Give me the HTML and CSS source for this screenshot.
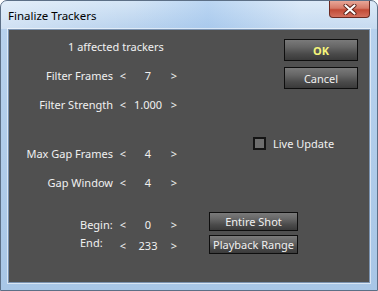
FILE: index.html
```html
<!DOCTYPE html>
<html lang="en">
<head>
    <meta charset="UTF-8">
    <title>Finalize Trackers</title>
    <link rel="stylesheet" href="styles.css">
</head>
<body>
    <div class="window">
        <div class="titlebar">
            <span class="title">Finalize Trackers</span>
            <div class="close-btn">
                <svg width="16" height="11" viewBox="0 0 16 11">
                    <path d="M3.5 1.5 L12.5 9.5 M12.5 1.5 L3.5 9.5" stroke="#5a2018" stroke-width="4" stroke-linecap="round"/>
                    <path d="M3.5 1.5 L12.5 9.5 M12.5 1.5 L3.5 9.5" stroke="#fff" stroke-width="2.2" stroke-linecap="round"/>
                </svg>
            </div>
        </div>
        <div class="frame">
            <div class="client">
                <div class="top">
                    <div class="form">
                        <div class="row affected">1 affected trackers</div>
                        <div class="row">
                            <span class="label">Filter Frames</span>
                            <span class="arrow">&lt;</span>
                            <span class="value">7</span>
                            <span class="arrow right">&gt;</span>
                        </div>
                        <div class="row">
                            <span class="label">Filter Strength</span>
                            <span class="arrow">&lt;</span>
                            <span class="value">1.000</span>
                            <span class="arrow right">&gt;</span>
                        </div>
                        <div class="row gap-top">
                            <span class="label">Max Gap Frames</span>
                            <span class="arrow">&lt;</span>
                            <span class="value">4</span>
                            <span class="arrow right">&gt;</span>
                        </div>
                        <div class="row">
                            <span class="label">Gap Window</span>
                            <span class="arrow">&lt;</span>
                            <span class="value">4</span>
                            <span class="arrow right">&gt;</span>
                        </div>
                    </div>
                    <div class="side">
                        <button class="btn ok">OK</button>
                        <button class="btn cancel">Cancel</button>
                        <label class="check">
                            <span class="box"></span>
                            <span>Live Update</span>
                        </label>
                    </div>
                </div>
                <div class="range">
                    <div class="range-rows">
                        <div class="row small">
                            <span class="label left">Begin:</span>
                            <span class="arrow">&lt;</span>
                            <span class="value">0</span>
                            <span class="arrow right">&gt;</span>
                        </div>
                        <div class="row small end">
                            <span class="label left">End:</span>
                            <span class="arrow">&lt;</span>
                            <span class="value">233</span>
                            <span class="arrow right">&gt;</span>
                        </div>
                    </div>
                    <div class="range-buttons">
                        <button class="btn wide">Entire Shot</button>
                        <button class="btn wide">Playback Range</button>
                    </div>
                </div>
            </div>
        </div>
    </div>
</body>
</html>
```

FILE: styles.css
```css
/* Page */
body {
    margin: 0;
    background: #ffffff;
    font-family: 'Noto Sans', sans-serif;
}

/* Aero window frame */
.window {
    width: 376px;
    height: 289px;
    border: 1px solid #5c6f86;
    border-radius: 7px 7px 0 0;
    background: linear-gradient(180deg, #d4e5f6 0px, #b7d1ed 29px, #a8c6e6 100%);
    display: flex;
    flex-direction: column;
}

.titlebar {
    height: 28px;
    display: flex;
    align-items: flex-start;
    background: linear-gradient(90deg, rgba(255,255,255,0.35) 0%, rgba(255,255,255,0) 35%, rgba(140,185,235,0.35) 55%, rgba(255,255,255,0.2) 80%);
    border-radius: 6px 6px 0 0;
}

.title {
    font-size: 11.5px;
    color: #000;
    padding: 7px 0 0 7px;
}

.close-btn {
    margin-left: auto;
    margin-right: 7px;
    width: 41px;
    height: 17px;
    box-sizing: border-box;
    border: 1px solid #6b2a22;
    border-top: none;
    border-radius: 0 0 4px 4px;
    background: linear-gradient(180deg, #e8a697 0%, #d67a68 45%, #c24a36 55%, #d4705e 100%);
    display: flex;
    justify-content: center;
    align-items: center;
}

.frame {
    padding: 0 7px 7px 7px;
    flex: 1;
    display: flex;
}

/* Dialog client area */
.client {
    flex: 1;
    background-color: #505050;
    border: 1px solid #7b93b0;
    box-shadow: 0 0 0 1px rgba(255, 255, 255, 0.55);
    color: #f0f0f0;
    font-size: 11px;
    display: flex;
    flex-direction: column;
}

.top {
    display: flex;
}

.form {
    width: 177px;
    padding-top: 2px;
}

.row {
    display: flex;
    align-items: center;
    height: 29px;
    white-space: nowrap;
}

.row.affected {
    padding-left: 59px;
}

.row.gap-top {
    margin-top: 20px;
}

.label {
    width: 104px;
    text-align: right;
}

.label.left {
    text-align: left;
    padding-left: 71px;
    width: 33px;
}

.arrow {
    width: 20px;
    text-align: center;
}

.arrow.right {
    width: 22px;
}

.value {
    width: 30px;
    text-align: center;
}

/* Right column */
.side {
    margin-left: auto;
    margin-right: 11px;
    display: flex;
    flex-direction: column;
    align-items: flex-end;
    padding-top: 9px;
    width: 105px;
}

.btn {
    font-family: 'Noto Sans', sans-serif;
    font-size: 11px;
    color: #f0f0f0;
    border: 1px solid #0e0e0e;
    background: linear-gradient(180deg, #7a7a7a 0%, #666 35%, #4a4a4a 70%, #3a3a3a 100%);
    padding: 0;
    line-height: 1;
    white-space: nowrap;
}

.btn.ok,
.btn.cancel {
    width: 74px;
    height: 22px;
}

.btn.ok {
    color: #f5f57a;
    font-weight: bold;
}

.btn.cancel {
    margin-top: 6px;
}

.check {
    align-self: flex-start;
    display: flex;
    align-items: center;
    margin-top: 47px;
    gap: 7px;
}

.box {
    width: 9px;
    height: 9px;
    border: 2px solid #141414;
    background: #6e6e6e;
}

/* Begin / End section */
.range {
    display: flex;
    margin-top: 15px;
}

.range-rows {
    width: 177px;
    padding-top: 3px;
}

.row.small {
    height: 18px;
}

.row.end .arrow,
.row.end .value {
    padding-top: 7px;
}

.range-buttons {
    margin-left: 23px;
    display: flex;
    flex-direction: column;
    gap: 4px;
}

.btn.wide {
    width: 89px;
    height: 19px;
}
```
